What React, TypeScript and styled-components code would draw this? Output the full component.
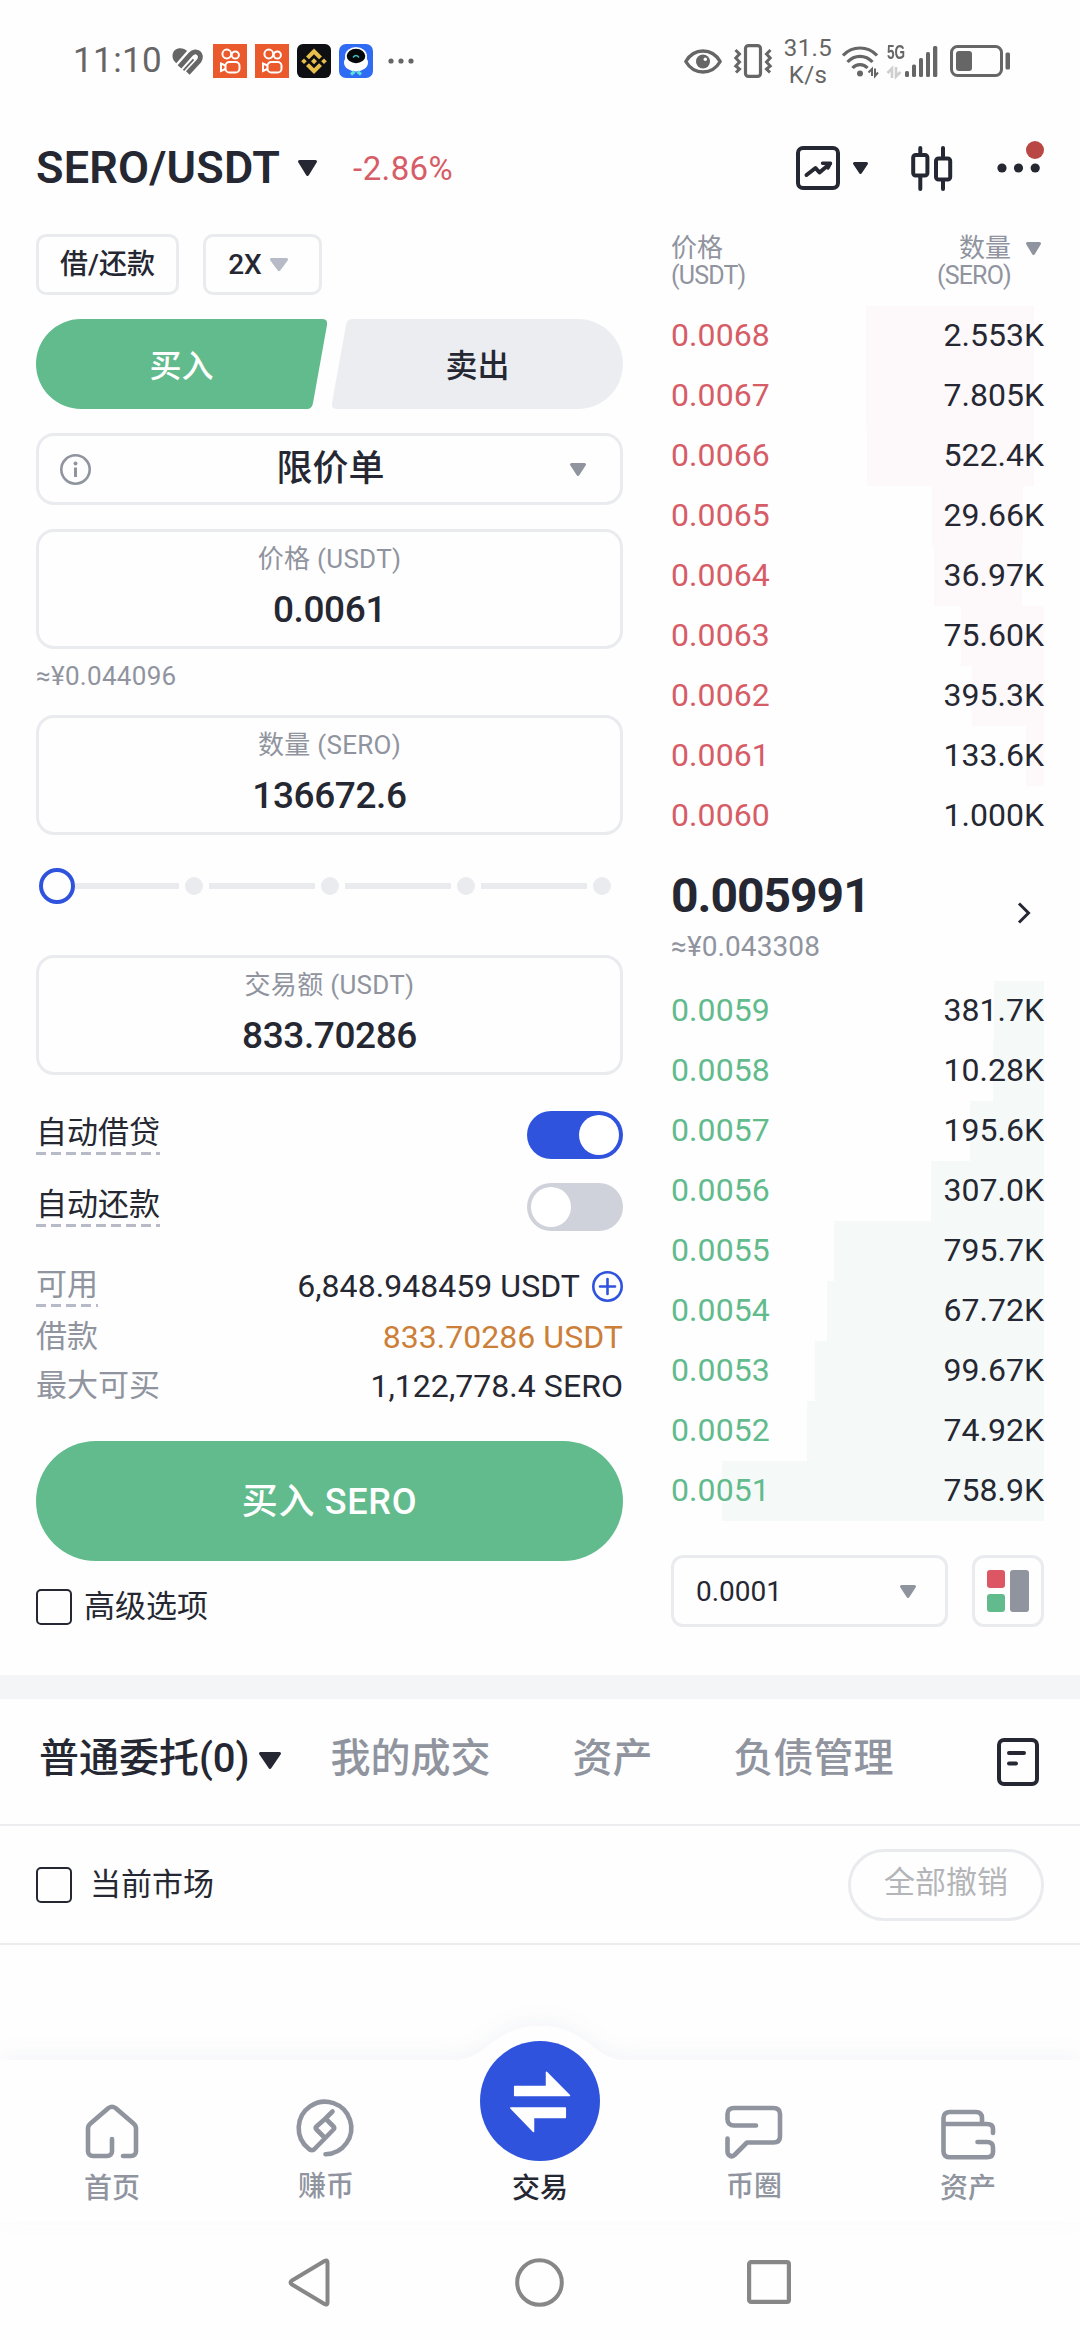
import React from 'react';
import styled, { createGlobalStyle } from 'styled-components';

const C = {
  ink: '#252832',
  grey: '#90949e',
  line: '#eaebef',
  green: '#62bb8c',
  red: '#d65d67',
  blue: '#3053dd',
  orange: '#cc7f38',
  page: '#fefefe',
  status: '#666666',
};

const GlobalStyle = createGlobalStyle`
  * { box-sizing: border-box; }
  body {
    margin: 0;
    background: ${C.page};
    color: ${C.ink};
    font-family: Roboto, "Noto Sans CJK SC", sans-serif;
  }
  svg { display: block; flex: none; overflow: visible; }
`;

const Screen = styled.div`
  width: 1080px;
  height: 2340px;
  display: flex;
  flex-direction: column;
  overflow: hidden;
  background: ${C.page};
  white-space: nowrap;
`;

/* ---------- status bar ---------- */

const StatusBar = styled.div`
  height: 122px;
  padding: 0 70px 0 73px;
  display: flex;
  align-items: center;
  justify-content: space-between;
  color: ${C.status};
`;

const StatusGroup = styled.div`
  display: flex;
  align-items: center;
`;

const StatusGap = styled.span`
  width: 12px;
`;

const Clock = styled.span`
  width: 99px;
  font-size: 35px;
  letter-spacing: 0.4px;
  line-height: 40px;
`;

const AppIcons = styled.div`
  display: flex;
  gap: 8px;
  margin: 0 15px 0 10px;
`;

const NetSpeed = styled.div`
  width: 50px;
  margin: 0 9px 0 11px;
  padding-top: 1px;
  font-size: 24px;
  line-height: 27px;
  letter-spacing: 0.4px;
  text-align: center;
`;

/* ---------- header ---------- */

const Header = styled.header`
  height: 92px;
  padding: 0 40px 0 36px;
  display: flex;
  align-items: center;
  justify-content: space-between;
`;

const PairGroup = styled.div`
  display: flex;
  align-items: center;
`;

const Pair = styled.h1`
  margin: 0 18px 0 0;
  font-size: 45px;
  font-weight: 600;
  line-height: 56px;
  letter-spacing: 0.2px;
`;

const Change = styled.span`
  margin-left: 36px;
  padding-top: 1px;
  font-size: 33px;
  line-height: 40px;
  letter-spacing: 0.4px;
  color: ${C.red};
`;

const HeaderTools = styled.div`
  display: flex;
  align-items: center;
`;

const ToolCaret = styled.span`
  margin: 0 43px 0 13px;
`;

const MoreButton = styled.div`
  position: relative;
  margin-left: 44px;
`;

const Badge = styled.span`
  position: absolute;
  top: -22px;
  right: -4px;
  width: 18px;
  height: 18px;
  border-radius: 50%;
  background: #b94743;
`;

/* ---------- main area ---------- */

const Main = styled.main`
  height: 1461px;
  padding: 20px 36px 0;
  display: grid;
  grid-template-columns: 587px 373px;
  column-gap: 48px;
`;

const Column = styled.section`
  display: flex;
  flex-direction: column;
`;

const Chips = styled.div`
  display: flex;
  gap: 24px;
`;

const Chip = styled.button<{ $width: number; $shift?: number }>`
  width: ${(p) => p.$width}px;
  height: 61px;
  padding: 0 ${(p) => p.$shift ?? 0}px 0 0;
  display: flex;
  align-items: center;
  justify-content: center;
  gap: 8px;
  border: 3px solid ${C.line};
  border-radius: 10px;
  background: none;
  color: ${C.ink};
  font: 500 28px/34px Roboto, "Noto Sans CJK SC", sans-serif;
`;

const SideSwitch = styled.div`
  display: flex;
  gap: 5px;
  margin: 24px 0;
`;

const SideTab = styled.button<{ $buy?: boolean }>`
  width: 291px;
  height: 90px;
  padding: 2px 0 0;
  border: 0;
  background: ${(p) => (p.$buy ? C.green : '#ecedf1')};
  color: ${(p) => (p.$buy ? '#fff' : C.ink)};
  font: 500 32px/90px Roboto, "Noto Sans CJK SC", sans-serif;
  clip-path: ${(p) =>
    p.$buy
      ? "path('M45 0H286Q292 0 291 6L277 84Q276 90 271 90H45A45 45 0 0 1 45 0Z')"
      : "path('M20 0H246A45 45 0 0 1 246 90H5Q-1 90 0 84L14 6Q15 0 20 0Z')"};
`;

const OrderType = styled.div`
  height: 72px;
  padding: 0 34px 0 21px;
  display: flex;
  align-items: center;
  justify-content: space-between;
  border: 3px solid ${C.line};
  border-radius: 18px;
  font-size: 36px;
  font-weight: 500;
  line-height: 44px;
`;

const Field = styled.label<{ $top?: number }>`
  height: 120px;
  margin-top: ${(p) => p.$top ?? 0}px;
  padding-top: 10px;
  display: flex;
  flex-direction: column;
  align-items: center;
  border: 3px solid ${C.line};
  border-radius: 18px;
`;

const FieldLabel = styled.span`
  font-size: 26px;
  line-height: 35px;
  letter-spacing: 0.3px;
  color: ${C.grey};
`;

const FieldValue = styled.span`
  margin-top: 10px;
  font-size: 37px;
  font-weight: 500;
  line-height: 45px;
  letter-spacing: -0.4px;
`;

const Approx = styled.div`
  height: 66px;
  font-size: 26px;
  line-height: 54px;
  letter-spacing: 0.3px;
  color: ${C.grey};
`;

const Slider = styled.div`
  height: 36px;
  margin: 33px 3px 51px;
  display: flex;
  align-items: center;
`;

const SliderKnob = styled.span`
  width: 36px;
  height: 36px;
  border: 4px solid ${C.blue};
  border-radius: 50%;
`;

const SliderTrack = styled.span`
  height: 6px;
  flex: 1;
  margin: 0 6px;
  background: ${C.line};
  ${SliderKnob} + & {
    flex: 0 0 103.5px;
    margin-left: 0;
  }
`;

const SliderStop = styled.span`
  width: 18px;
  height: 18px;
  border-radius: 50%;
  background: ${C.line};
  &:last-child { margin-right: 9px; }
`;

const ToggleRow = styled.div<{ $top: number }>`
  height: 48px;
  margin-top: ${(p) => p.$top}px;
  display: flex;
  justify-content: space-between;
`;

const Dashed = styled.span<{ $muted?: boolean }>`
  height: 44px;
  font-size: 31px;
  line-height: 43px;
  color: ${(p) => (p.$muted ? C.grey : C.ink)};
  background: repeating-linear-gradient(90deg, #b7bbc8 0 10px, transparent 10px 15px) left bottom / 100% 3px no-repeat;
`;

const Toggle = styled.span<{ $on?: boolean }>`
  width: 96px;
  height: 48px;
  padding: 4px;
  display: flex;
  justify-content: ${(p) => (p.$on ? 'flex-end' : 'flex-start')};
  border-radius: 24px;
  background: ${(p) => (p.$on ? C.blue : '#cfd2da')};
  &::after {
    content: '';
    width: 40px;
    height: 40px;
    border-radius: 50%;
    background: #fff;
  }
`;

const Info = styled.div`
  margin-top: 32px;
  display: flex;
  flex-direction: column;
`;

const InfoRow = styled.div<{ $height: number }>`
  height: ${(p) => p.$height}px;
  display: flex;
  align-items: flex-start;
  justify-content: space-between;
  font-size: 32px;
  line-height: 46px;
`;

const InfoLabel = styled.span`
  font-size: 31px;
  color: ${C.grey};
`;

const InfoValue = styled.span<{ $warn?: boolean }>`
  display: flex;
  align-items: center;
  gap: 12px;
  letter-spacing: 0.05px;
  color: ${(p) => (p.$warn ? C.orange : C.ink)};
`;

const BuyButton = styled.button`
  height: 120px;
  margin-top: 30px;
  padding: 1px 0 0;
  border: 0;
  border-radius: 60px;
  background: ${C.green};
  color: #fff;
  font: 500 36px/120px Roboto, "Noto Sans CJK SC", sans-serif;
  letter-spacing: 0.7px;
`;

const Advanced = styled.div`
  margin-top: 27px;
`;

const CheckRow = styled.label<{ $gap: number }>`
  display: flex;
  align-items: center;
  gap: ${(p) => p.$gap}px;
  font-size: 31px;
  line-height: 38px;
`;

const Box = styled.span`
  width: 36px;
  height: 36px;
  border: 2.5px solid ${C.ink};
  border-radius: 5px;
`;

/* ---------- order book ---------- */

const BookHead = styled.div`
  height: 72px;
  display: flex;
  justify-content: space-between;
  font-size: 25px;
  line-height: 28px;
  letter-spacing: -0.8px;
  color: ${C.grey};
`;

const HeadCell = styled.div<{ $end?: boolean }>`
  display: flex;
  flex-direction: column;
  text-align: ${(p) => (p.$end ? 'right' : 'left')};
  b { font-weight: 400; font-size: 26px; letter-spacing: 0; }
`;

const HeadSort = styled.div`
  display: flex;
  gap: 15px;
  padding-right: 3px;
  svg { margin-top: 8px; }
`;

const BookRow = styled.div`
  position: relative;
  height: 60px;
  display: flex;
  justify-content: space-between;
  font-size: 32px;
  line-height: 58px;
`;

const Depth = styled.span<{ $ask?: boolean }>`
  position: absolute;
  top: 0;
  bottom: 0;
  background: ${(p) => (p.$ask ? '#fdf8fa' : '#f5faf9')};
`;

const Price = styled.span<{ $ask?: boolean }>`
  position: relative;
  letter-spacing: 0.1px;
  color: ${(p) => (p.$ask ? C.red : C.green)};
`;

const Amount = styled.span`
  position: relative;
`;

const LastPrice = styled.div`
  height: 135px;
  padding: 22px 14px 0 0;
  display: flex;
  justify-content: space-between;
  svg { margin-top: 34px; }
`;

const LastValue = styled.div`
  font-size: 48px;
  font-weight: 700;
  line-height: 56px;
  letter-spacing: -1px;
`;

const LastFiat = styled.div`
  font-size: 28px;
  line-height: 46px;
  letter-spacing: 0.1px;
  color: ${C.grey};
`;

const BookFoot = styled.div`
  margin-top: 34px;
  display: flex;
  justify-content: space-between;
`;

const Outlined = styled.div<{ $width: number }>`
  width: ${(p) => p.$width}px;
  height: 72px;
  display: flex;
  align-items: center;
  justify-content: space-between;
  padding: 0 ${(p) => (p.$width > 100 ? '29px 0 22px' : '12px')};
  border: 3px solid ${C.line};
  border-radius: 12px;
  font-size: 28px;
`;

const LayoutGlyph = styled.div`
  width: 42px;
  height: 42px;
  display: grid;
  grid-template: 18px 18px / 18px 19px;
  gap: 6px 5px;
`;

const Tile = styled.span<{ $color: string; $tall?: boolean }>`
  border-radius: 3px;
  background: ${(p) => p.$color};
  grid-row: ${(p) => (p.$tall ? '1 / span 2' : 'auto')};
  grid-column: ${(p) => (p.$tall ? 2 : 1)};
`;

/* ---------- orders ---------- */

const Orders = styled.section`
  flex: 1;
  border-top: 24px solid #f4f5f7;
`;

const OrderTabs = styled.nav`
  height: 127px;
  padding: 0 41px 6px 39px;
  display: flex;
  align-items: center;
  border-bottom: 2px solid #ededef;
  font-size: 40px;
  font-weight: 500;
  line-height: 48px;
  > svg:last-child { margin: 6px 0 0 auto; }
`;

const OrderTab = styled.span<{ $active?: boolean; $left?: number }>`
  margin-left: ${(p) => p.$left ?? 0}px;
  display: flex;
  align-items: center;
  gap: 9px;
  color: ${(p) => (p.$active ? C.ink : C.grey)};
  svg { margin-top: 4px; }
`;

const Filter = styled.div`
  height: 119px;
  padding: 0 36px;
  display: flex;
  align-items: center;
  justify-content: space-between;
  border-bottom: 2px solid #ededef;
`;

const CancelAll = styled.button`
  width: 196px;
  height: 72px;
  padding: 0 0 3px;
  border: 3px solid ${C.line};
  border-radius: 36px;
  background: none;
  color: #b4b5b8;
  font: 400 31px/60px Roboto, "Noto Sans CJK SC", sans-serif;
`;

/* ---------- bottom navigation ---------- */

const TabBar = styled.nav`
  position: relative;
  height: 162px;
  padding: 0 5px;
  display: grid;
  grid-template-columns: repeat(5, 1fr);
  background: ${C.page};
`;

const BarShape = styled.svg`
  position: absolute;
  left: 0;
  top: -34px;
`;

const TabItem = styled.div<{ $active?: boolean; $raise?: number }>`
  position: relative;
  height: 149px;
  padding-bottom: ${(p) => p.$raise ?? 0}px;
  display: flex;
  flex-direction: column;
  align-items: center;
  justify-content: flex-end;
  gap: ${(p) => (p.$active ? 8 : 10)}px;
  color: ${(p) => (p.$active ? C.ink : C.grey)};
  font-size: 28px;
  font-weight: 500;
  line-height: 40px;
`;

const TradeButton = styled.span`
  width: 120px;
  height: 120px;
  flex: none;
  display: flex;
  align-items: center;
  justify-content: center;
  border-radius: 50%;
  background: ${C.blue};
`;

const SystemNav = styled.div`
  height: 118px;
  padding: 2px 289px 0 288px;
  display: flex;
  align-items: center;
  justify-content: space-between;
`;

/* ---------- drawings ---------- */

const Caret = ({ w, h, color }: { w: number; h: number; color: string }) => (
  <svg width={w} height={h} viewBox={`0 0 ${w} ${h}`}>
    <path
      d={`M1.5 1.5H${w - 1.5}L${w / 2} ${h - 1.5}Z`}
      fill={color}
      stroke={color}
      strokeWidth="3"
      strokeLinejoin="round"
    />
  </svg>
);

const HeartIcon = () => (
  <svg width="31" height="27" viewBox="0 0 31 27">
    <path d="M0.500 8C0.500 2.500 4.500 0.300 8.300 0.300C11 0.300 13.200 1.300 15 3L4.300 15.300C1.800 13 0.500 11 0.500 8Z" fill={C.status} />
    <path d="M7.500 18.800L18.800 6.200C24 0.500 31.500 6.500 27 13L15.800 25" fill="none" stroke={C.status} strokeWidth="5" />
    <path d="M11.500 22.300L21.500 11.300" stroke={C.status} strokeWidth="1.800" />
  </svg>
);

const CameraAppIcon = () => (
  <svg width="34" height="34" viewBox="0 0 34 34">
    <rect width="34" height="34" fill="#ea5a2c" />
    <g fill="none" stroke="#fff" strokeWidth="2">
      <circle cx="13.800" cy="10" r="4.400" />
      <circle cx="22.300" cy="11" r="3.600" />
      <rect x="12.500" y="18" width="14" height="10.500" rx="3.800" />
      <path d="M12.500 21.500L8 19.500V27L12.500 25" />
    </g>
  </svg>
);

const ExchangeAppIcon = () => (
  <svg width="34" height="34" viewBox="0 0 34 34">
    <rect width="34" height="34" rx="6" fill="#0d0f12" />
    <g fill="#e8bf4a">
      <path d="M17 4.500L25 12.500L22 15.300L17 10.300L12 15.300L9 12.500Z" />
      <path d="M17 30L25 22L22 19.200L17 24.200L12 19.200L9 22Z" />
      <path d="M17 14.200L20 17.200L17 20.200L14 17.200Z" />
      <path d="M7 14.400L9.800 17.200L7 20L4.200 17.200Z" />
      <path d="M27 14.400L29.800 17.200L27 20L24.200 17.200Z" />
    </g>
  </svg>
);

const RobotAppIcon = () => (
  <svg width="34" height="34" viewBox="0 0 34 34">
    <rect width="34" height="34" rx="7" fill="#2f6cf3" />
    <ellipse cx="17" cy="18.500" rx="12" ry="9" fill="#fff" />
    <ellipse cx="17" cy="12.500" rx="11" ry="9.500" fill="#fff" />
    <ellipse cx="17" cy="12" rx="9.300" ry="7.200" fill="#05070b" />
    <path d="M14 13.500Q17 9.500 20 13.500" fill="none" stroke="#3fb9b4" strokeWidth="1.600" />
    <path d="M15.500 27.500L12 30.500M18.500 27.500L22 30.500" stroke="#5de0d8" strokeWidth="3" />
  </svg>
);

const MoreDots = () => (
  <svg width="26" height="6" viewBox="0 0 26 6" fill={C.status}>
    <circle cx="3" cy="3" r="2.600" />
    <circle cx="13" cy="3" r="2.600" />
    <circle cx="23" cy="3" r="2.600" />
  </svg>
);

const EyeIcon = () => (
  <svg width="38" height="25" viewBox="0 0 38 25">
    <path d="M1.800 12.500C10 -1.500 28 -1.500 36.200 12.500C28 26.500 10 26.500 1.800 12.500Z" fill="none" stroke={C.status} strokeWidth="3.400" strokeLinejoin="round" />
    <circle cx="19" cy="12.500" r="7" fill={C.status} />
    <circle cx="21.300" cy="10.300" r="1.700" fill="#fff" />
  </svg>
);

const VibrateIcon = () => (
  <svg width="38" height="34" viewBox="0 0 38 34" fill="none" stroke={C.status} strokeWidth="3.200">
    <rect x="11.500" y="1.600" width="15" height="30.800" rx="3" />
    <path d="M1.500 6L5.500 10L1.800 14L5.500 18L1.800 22L5.500 25L2 28.500" strokeWidth="3" />
    <path d="M36.500 6L32.500 10L36.200 14L32.500 18L36.200 22L32.500 25L36 28.500" strokeWidth="3" />
  </svg>
);

const WifiIcon = () => (
  <svg width="37" height="31" viewBox="0 0 37 31" fill="none" stroke={C.status} strokeWidth="3.200">
    <path d="M1 9.500C10 -0.500 26 -0.500 35 9.500" />
    <path d="M5.500 16C12.500 8.500 23.500 8.500 30.500 16" />
    <path d="M10.500 22C14.500 17.500 21.500 17.500 25.500 22" />
    <circle cx="18" cy="27.500" r="3" fill={C.status} stroke="none" />
    <path d="M26.500 26.500L30 23V30M33 22.500V30L36 26.500" strokeWidth="2" />
  </svg>
);

const NetworkLabel = styled.span`
  align-self: flex-start;
  width: 24px;
  font: 700 20px/17px "Liberation Sans", sans-serif;
  letter-spacing: 0;
  transform: scaleX(0.68);
  transform-origin: left top;
`;

const NetworkType = styled.div`
  height: 34px;
  width: 18px;
  margin-left: 8px;
  display: flex;
  flex-direction: column;
  justify-content: space-between;
`;

const ArrowsGlyph = () => (
  <svg width="14" height="11" viewBox="0 0 14 11" fill="none" stroke="#cfcfcf" strokeWidth="2.600">
    <path d="M0.500 6L5 1.500V11M9 0V9.500L13.500 5" />
  </svg>
);

const SignalIcon = () => (
  <svg width="33" height="31" viewBox="0 0 33 31" fill={C.status}>
    <rect x="0" y="25" width="4" height="6" rx="1.500" />
    <rect x="7" y="18.500" width="4" height="12.500" rx="1.500" />
    <rect x="14" y="12" width="4" height="19" rx="1.500" />
    <rect x="21" y="6" width="4" height="25" rx="1.500" />
    <rect x="28" y="0" width="4.300" height="31" rx="1.500" />
  </svg>
);

const BatteryIcon = () => (
  <svg width="60" height="32" viewBox="0 0 60 32">
    <rect x="1.500" y="1.500" width="50" height="29" rx="6" fill="none" stroke={C.status} strokeWidth="3" />
    <rect x="6" y="6" width="16" height="20" rx="3" fill={C.status} />
    <rect x="55.500" y="7.500" width="4.500" height="17" rx="1.500" fill={C.status} />
  </svg>
);

const ChartIcon = () => (
  <svg width="44" height="44" viewBox="0 0 44 44" fill="none" stroke={C.ink} strokeWidth="4" strokeLinecap="round" strokeLinejoin="round">
    <rect x="2" y="2" width="40" height="40" rx="5" />
    <path d="M10.500 29L19.500 22L23.500 26.500L33.500 18" />
    <path d="M26.500 17.200H34.500L32 22" strokeWidth="3.400" />
  </svg>
);

const CandleIcon = () => (
  <svg width="42" height="45" viewBox="0 0 42 45" fill="none" stroke={C.ink} strokeWidth="4" strokeLinecap="round">
    <rect x="2.200" y="9" width="14.200" height="20.500" rx="2.500" />
    <path d="M9.300 2V8M9.300 30V43" />
    <rect x="25" y="12.500" width="14.200" height="21" rx="2.500" />
    <path d="M32 2V12M32 34V43" />
  </svg>
);

const DotsIcon = () => (
  <svg width="43" height="10" viewBox="0 0 43 10" fill={C.ink}>
    <circle cx="5" cy="5" r="4.600" />
    <circle cx="21.500" cy="5" r="4.600" />
    <circle cx="38.200" cy="5" r="4.600" />
  </svg>
);

const InfoIcon = () => (
  <svg width="31" height="31" viewBox="0 0 31 31">
    <circle cx="15.500" cy="15.500" r="14.200" fill="none" stroke={C.grey} strokeWidth="2.600" />
    <circle cx="15.500" cy="9.500" r="2" fill={C.grey} />
    <path d="M15.500 13.500V23" stroke={C.grey} strokeWidth="3" />
  </svg>
);

const PlusIcon = () => (
  <svg width="31" height="31" viewBox="0 0 31 31" fill="none" stroke={C.blue} strokeWidth="2.600">
    <circle cx="15.500" cy="15.500" r="14.200" />
    <path d="M15.500 8V23M8 15.500H23" strokeLinecap="round" />
  </svg>
);

const Chevron = () => (
  <svg width="12" height="22" viewBox="0 0 12 22" fill="none" stroke={C.ink} strokeWidth="3">
    <path d="M1 1.500L10.500 11L1 20.500" />
  </svg>
);

const DocIcon = () => (
  <svg width="42" height="48" viewBox="0 0 42 48" fill="none" stroke={C.ink} strokeWidth="4" strokeLinecap="round">
    <rect x="2" y="2" width="38" height="44" rx="5" />
    <path d="M12 15H27M12 25.500H19" />
  </svg>
);

const HomeIcon = () => (
  <svg width="54" height="55" viewBox="0 0 54 55" fill="none" stroke={C.grey} strokeWidth="4.600" strokeLinecap="round" strokeLinejoin="round">
    <path d="M27 35V47C27 50 25 52 22 52H8C5 52 3 50 3 47V25C3 23 3.500 21 5.500 19.500L23.500 4Q27 1.500 30.500 4L48.500 19.500C50.500 21 51 23 51 25V47C51 50 49 52 46 52H38" />
  </svg>
);

const EarnIcon = () => (
  <svg width="58" height="58" viewBox="0 0 58 58" fill="none" stroke={C.grey} strokeWidth="4.600" strokeLinecap="round" strokeLinejoin="round">
    <path d="M28.500 55.300A26.300 26.300 0 1 0 11.500 49.500Q15 53 18 49.500L36.500 30.500Q38 29 36.500 27.500L28.500 19.500L19.500 27.500Q18 29 19.500 30.500L27.500 38.500M28.500 19.500L35.500 12.500" />
  </svg>
);

const SwapIcon = () => (
  <svg width="60" height="61" viewBox="0 0 60 61" fill="#fff" stroke="#fff" strokeLinejoin="round" strokeWidth="1.500">
    <path d="M4.700 15.500H36.500V1.200L59.500 24.500H4.700Z" />
    <path d="M0.800 37H55.300V46.500H23.500V60.500L0.800 37Z" />
  </svg>
);

const CircleChatIcon = () => (
  <svg width="58" height="53" viewBox="0 0 58 53" fill="none" stroke={C.grey} strokeWidth="4.600" strokeLinecap="round" strokeLinejoin="round">
    <path d="M31 21.500H9C5 21.500 2.500 19 2.500 15.500V10C2.500 6 5 4 9 4H48C52.500 4 55 6 55 10V32.500C55 36.500 52.500 38.500 48.500 38.500H22L9.500 51Q6.500 53.500 4 51Q2.500 50 2.500 47V34.500" />
  </svg>
);

const WalletIcon = () => (
  <svg width="55" height="51" viewBox="0 0 55 51" fill="none" stroke={C.grey} strokeWidth="4.600" strokeLinecap="round" strokeLinejoin="round">
    <path d="M2.500 16H46C50 16 52 18 52 21V25M36.500 34H46C50 34 52 36 52 39.500V44C52 47.500 50 49.300 46 49.300H9C5 49.300 2.500 47.500 2.500 43.500V10C2.500 6 5 4 9 4H35C39 4 41 6.500 41 10V15.500" />
  </svg>
);

const BackGlyph = () => (
  <svg width="42" height="49" viewBox="0 0 42 49" fill="none" stroke="#878787" strokeWidth="4" strokeLinejoin="round">
    <path d="M36.500 3Q39.500 1.500 39.500 4.500V44.500Q39.500 47.500 36.500 46L4 26.500Q1 24.500 4 22.500Z" />
  </svg>
);

const HomeGlyph = () => (
  <svg width="49" height="49" viewBox="0 0 49 49" fill="none" stroke="#878787" strokeWidth="4">
    <circle cx="25.500" cy="24.500" r="22.300" />
  </svg>
);

const RecentsGlyph = () => (
  <svg width="44" height="44" viewBox="0 0 44 44" fill="none" stroke="#878787" strokeWidth="4.200">
    <rect x="2.100" y="2.100" width="39.800" height="39.800" rx="2" />
  </svg>
);

/* ---------- data ---------- */

interface Level {
  price: string;
  amount: string;
  depth: number;
  inset?: number;
}

const asks: Level[] = [
  { price: '0.0068', amount: '2.553K', depth: 168, inset: 10 },
  { price: '0.0067', amount: '7.805K', depth: 168, inset: 10 },
  { price: '0.0066', amount: '522.4K', depth: 167, inset: 10 },
  { price: '0.0065', amount: '29.66K', depth: 91, inset: 21 },
  { price: '0.0064', amount: '36.97K', depth: 88, inset: 22 },
  { price: '0.0063', amount: '75.60K', depth: 83 },
  { price: '0.0062', amount: '395.3K', depth: 72 },
  { price: '0.0061', amount: '133.6K', depth: 18 },
  { price: '0.0060', amount: '1.000K', depth: 0 },
];

const bids: Level[] = [
  { price: '0.0059', amount: '381.7K', depth: 50 },
  { price: '0.0058', amount: '10.28K', depth: 51 },
  { price: '0.0057', amount: '195.6K', depth: 74 },
  { price: '0.0056', amount: '307.0K', depth: 113 },
  { price: '0.0055', amount: '795.7K', depth: 210 },
  { price: '0.0054', amount: '67.72K', depth: 217 },
  { price: '0.0053', amount: '99.67K', depth: 229 },
  { price: '0.0052', amount: '74.92K', depth: 237 },
  { price: '0.0051', amount: '758.9K', depth: 322 },
];

const Levels = ({ rows, ask }: { rows: Level[]; ask?: boolean }) => (
  <div>
    {rows.map((r) => (
      <BookRow key={r.price}>
        <Depth $ask={ask} style={{ width: r.depth, right: r.inset ?? 0 }} />
        <Price $ask={ask}>{r.price}</Price>
        <Amount>{r.amount}</Amount>
      </BookRow>
    ))}
  </div>
);

export default function App() {
  return (
    <Screen>
      <GlobalStyle />

      <StatusBar>
        <StatusGroup>
          <Clock>11:10</Clock>
          <HeartIcon />
          <AppIcons>
            <CameraAppIcon />
            <CameraAppIcon />
            <ExchangeAppIcon />
            <RobotAppIcon />
          </AppIcons>
          <MoreDots />
        </StatusGroup>
        <StatusGroup>
          <EyeIcon />
          <StatusGap />
          <VibrateIcon />
          <NetSpeed>
            31.5
            <br />
            K/s
          </NetSpeed>
          <WifiIcon />
          <NetworkType>
            <NetworkLabel>5G</NetworkLabel>
            <ArrowsGlyph />
          </NetworkType>
          <SignalIcon />
          <StatusGap />
          <BatteryIcon />
        </StatusGroup>
      </StatusBar>

      <Header>
        <PairGroup>
          <Pair>SERO/USDT</Pair>
          <Caret w={19} h={16} color={C.ink} />
          <Change>-2.86%</Change>
        </PairGroup>
        <HeaderTools>
          <ChartIcon />
          <ToolCaret>
            <Caret w={15} h={12} color={C.ink} />
          </ToolCaret>
          <CandleIcon />
          <MoreButton>
            <DotsIcon />
            <Badge />
          </MoreButton>
        </HeaderTools>
      </Header>

      <Main>
        <Column>
          <Chips>
            <Chip $width={143}>借/还款</Chip>
            <Chip $width={119} $shift={9}>
              2X
              <Caret w={18} h={13} color="#b7bbc8" />
            </Chip>
          </Chips>

          <SideSwitch>
            <SideTab $buy>买入</SideTab>
            <SideTab>卖出</SideTab>
          </SideSwitch>

          <OrderType>
            <InfoIcon />
            限价单
            <Caret w={16} h={13} color={C.grey} />
          </OrderType>

          <Field $top={24}>
            <FieldLabel>价格 (USDT)</FieldLabel>
            <FieldValue>0.0061</FieldValue>
          </Field>
          <Approx>≈¥0.044096</Approx>
          <Field>
            <FieldLabel>数量 (SERO)</FieldLabel>
            <FieldValue>136672.6</FieldValue>
          </Field>

          <Slider>
            <SliderKnob />
            {[25, 50, 75, 100].map((stop) => (
              <React.Fragment key={stop}>
                <SliderTrack />
                <SliderStop />
              </React.Fragment>
            ))}
          </Slider>

          <Field>
            <FieldLabel>交易额 (USDT)</FieldLabel>
            <FieldValue>833.70286</FieldValue>
          </Field>

          <ToggleRow $top={36}>
            <Dashed>自动借贷</Dashed>
            <Toggle $on />
          </ToggleRow>
          <ToggleRow $top={24}>
            <Dashed>自动还款</Dashed>
            <Toggle />
          </ToggleRow>

          <Info>
            <InfoRow $height={51}>
              <Dashed $muted>可用</Dashed>
              <InfoValue>
                6,848.948459 USDT
                <PlusIcon />
              </InfoValue>
            </InfoRow>
            <InfoRow $height={49}>
              <InfoLabel>借款</InfoLabel>
              <InfoValue $warn>833.70286 USDT</InfoValue>
            </InfoRow>
            <InfoRow $height={48}>
              <InfoLabel>最大可买</InfoLabel>
              <InfoValue>1,122,778.4 SERO</InfoValue>
            </InfoRow>
          </Info>

          <BuyButton>买入 SERO</BuyButton>
          <Advanced>
            <CheckRow $gap={12}>
              <Box />
              高级选项
            </CheckRow>
          </Advanced>
        </Column>

        <Column>
          <BookHead>
            <HeadCell>
              <b>价格</b>
              (USDT)
            </HeadCell>
            <HeadSort>
              <HeadCell $end>
                <b>数量</b>
                (SERO)
              </HeadCell>
              <Caret w={15} h={13} color={C.grey} />
            </HeadSort>
          </BookHead>

          <Levels rows={asks} ask />

          <LastPrice>
            <div>
              <LastValue>0.005991</LastValue>
              <LastFiat>≈¥0.043308</LastFiat>
            </div>
            <Chevron />
          </LastPrice>

          <Levels rows={bids} />

          <BookFoot>
            <Outlined $width={277}>
              0.0001
              <Caret w={16} h={13} color={C.grey} />
            </Outlined>
            <Outlined $width={72}>
              <LayoutGlyph>
                <Tile $color="#dd5663" />
                <Tile $color={C.grey} $tall />
                <Tile $color={C.green} />
              </LayoutGlyph>
            </Outlined>
          </BookFoot>
        </Column>
      </Main>

      <Orders>
        <OrderTabs>
          <OrderTab $active>
            普通委托(0)
            <Caret w={22} h={17} color={C.ink} />
          </OrderTab>
          <OrderTab $left={50}>我的成交</OrderTab>
          <OrderTab $left={82}>资产</OrderTab>
          <OrderTab $left={81}>负债管理</OrderTab>
          <DocIcon />
        </OrderTabs>
        <Filter>
          <CheckRow $gap={18}>
            <Box />
            当前市场
          </CheckRow>
          <CancelAll>全部撤销</CancelAll>
        </Filter>
      </Orders>

      <TabBar>
        <BarShape width="1080" height="196" viewBox="0 0 1080 196">
          <path
            d="M0 34H455C487 34 492 0 540 0C588 0 593 34 625 34H1080V196H0Z"
            fill={C.page}
            style={{ filter: 'drop-shadow(0 -5px 10px rgba(60, 70, 130, 0.05))' }}
          />
        </BarShape>
        <TabItem>
          <HomeIcon />
          首页
        </TabItem>
        <TabItem $raise={2}>
          <EarnIcon />
          赚币
        </TabItem>
        <TabItem $active>
          <TradeButton>
            <SwapIcon />
          </TradeButton>
          交易
        </TabItem>
        <TabItem $raise={2}>
          <CircleChatIcon />
          币圈
        </TabItem>
        <TabItem>
          <WalletIcon />
          资产
        </TabItem>
      </TabBar>

      <SystemNav>
        <BackGlyph />
        <HomeGlyph />
        <RecentsGlyph />
      </SystemNav>
    </Screen>
  );
}
